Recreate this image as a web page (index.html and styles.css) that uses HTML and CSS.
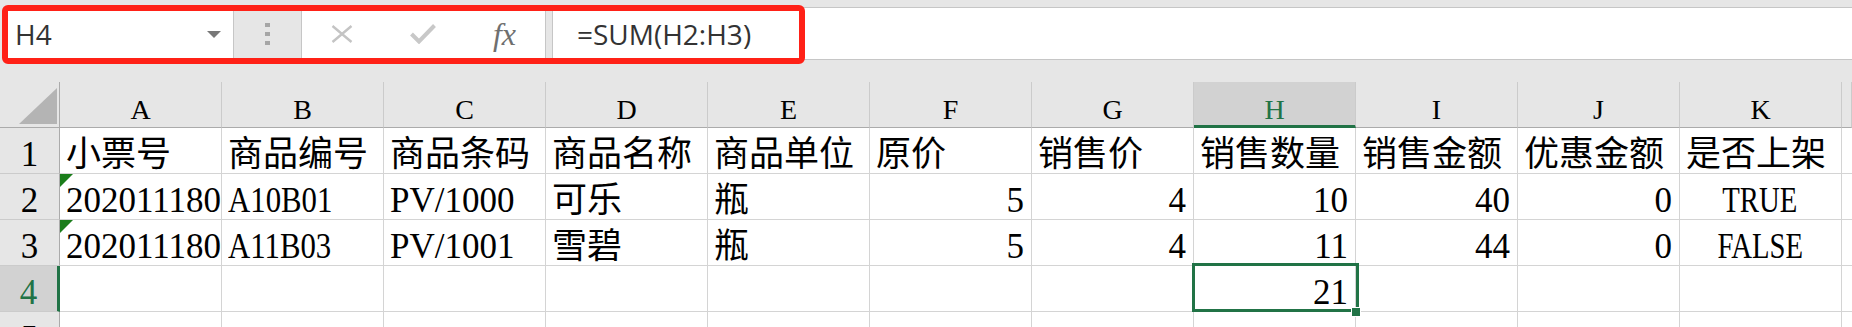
FILE: index.html
```html
<!DOCTYPE html>
<html lang="zh-CN">
<head>
<meta charset="utf-8">
<title>Sheet</title>
<link rel="stylesheet" href="styles.css">
</head>
<body>
<div class="app">
  <div class="fbar">
    <div class="namebox"><span class="ref">H4</span><span class="caret"></span></div>
    <div class="grip"><i></i><i></i><i></i></div>
    <div class="tools">
      <svg class="ic" width="22" height="18" viewBox="0 0 22 18"><path d="M1.5 1 L20.5 17 M20.5 1 L1.5 17" stroke="#c4c4c4" stroke-width="2.4" fill="none"/></svg>
      <svg class="ic" width="26" height="20" viewBox="0 0 26 20"><path d="M1.5 10 L9 17.5 L24.5 1.5" stroke="#c8c8c8" stroke-width="4" fill="none"/></svg>
      <span class="fx">fx</span>
    </div>
    <div class="sep"></div>
    <div class="formula">=SUM(H2:H3)</div>
  </div>
  <div class="annot"></div>
  <div class="sheet">
    <div class="corner"></div>
    <div class="ch">A</div><div class="ch">B</div><div class="ch">C</div><div class="ch">D</div><div class="ch">E</div><div class="ch">F</div><div class="ch">G</div><div class="ch sel">H</div><div class="ch">I</div><div class="ch">J</div><div class="ch">K</div><div class="ch"></div>

    <div class="rh">1</div>
    <div class="c">小票号</div><div class="c">商品编号</div><div class="c">商品条码</div><div class="c">商品名称</div><div class="c">商品单位</div><div class="c">原价</div><div class="c">销售价</div><div class="c">销售数量</div><div class="c">销售金额</div><div class="c">优惠金额</div><div class="c">是否上架</div><div class="c"></div>

    <div class="rh">2</div>
    <div class="c flag">20201118001</div><div class="c"><span class="nl">A10B01</span></div><div class="c">PV/1000</div><div class="c">可乐</div><div class="c">瓶</div><div class="c r">5</div><div class="c r">4</div><div class="c r">10</div><div class="c r">40</div><div class="c r">0</div><div class="c m"><span class="nc">TRUE</span></div><div class="c"></div>

    <div class="rh">3</div>
    <div class="c flag">20201118002</div><div class="c"><span class="nl">A11B03</span></div><div class="c">PV/1001</div><div class="c">雪碧</div><div class="c">瓶</div><div class="c r">5</div><div class="c r">4</div><div class="c r">11</div><div class="c r">44</div><div class="c r">0</div><div class="c m"><span class="nc">FALSE</span></div><div class="c"></div>

    <div class="rh sel">4</div>
    <div class="c"></div><div class="c"></div><div class="c"></div><div class="c"></div><div class="c"></div><div class="c"></div><div class="c"></div><div class="c r active">21<span class="frame"></span><span class="handle"></span></div><div class="c"></div><div class="c"></div><div class="c"></div><div class="c"></div>

    <div class="rh">5</div>
    <div class="c"></div><div class="c"></div><div class="c"></div><div class="c"></div><div class="c"></div><div class="c"></div><div class="c"></div><div class="c"></div><div class="c"></div><div class="c"></div><div class="c"></div><div class="c"></div>
  </div>
</div>
</body>
</html>
```

FILE: styles.css
```css
* { box-sizing: border-box; margin: 0; padding: 0; }
html, body { width: 1852px; height: 327px; overflow: hidden; background: #e6e6e6; }

.app { position: relative; padding-top: 7px; height: 327px; }

/* formula bar */
.fbar {
  display: flex;
  height: 53px;
  margin-left: 5px;
  border-top: 1px solid #c6c6c6;
  border-bottom: 1px solid #c6c6c6;
  background: #fff;
  font-family: "Open Sans", "Noto Sans", sans-serif;
  color: #333;
}
.namebox {
  width: 229px;
  display: flex;
  align-items: center;
  justify-content: space-between;
  padding: 0 12px 0 10px;
  border-right: 1px solid #c6c6c6;
  font-size: 28px;
}
.caret {
  width: 0; height: 0;
  border-left: 7px solid transparent;
  border-right: 7px solid transparent;
  border-top: 7px solid #787878;
  margin-top: 1px;
}
.grip {
  width: 68px;
  background: #e6e6e6;
  border-right: 1px solid #c6c6c6;
  display: flex;
  flex-direction: column;
  align-items: center;
  justify-content: center;
  gap: 5px;
}
.grip i { display: block; width: 5px; height: 4px; background: #a6a6a6; }
.tools {
  width: 243px;
  display: flex;
  align-items: center;
  justify-content: space-between;
  padding: 0 29px;
}
.ic { display: block; }
.fx {
  font-family: "Liberation Serif", serif;
  font-style: italic;
  font-size: 32px;
  line-height: 1;
  color: #6f6f6f;
}
.sep {
  width: 8px;
  background: #e6e6e6;
  border-left: 1px solid #c6c6c6;
  border-right: 1px solid #c6c6c6;
}
.formula {
  flex: 1;
  display: flex;
  align-items: center;
  padding-left: 24px;
  font-size: 28px;
}

/* red annotation frame */
.annot {
  position: absolute;
  left: 2px; top: 5px;
  width: 803px; height: 59px;
  border: 6px solid #ff2117;
  border-radius: 6px;
}

/* sheet grid */
.sheet {
  margin-top: 22px;
  display: grid;
  grid-template-columns: 60px repeat(11, 162px) 10px;
  grid-auto-rows: 46px;
  background: #fff;
  font-family: "Liberation Serif", "Noto Sans CJK SC", serif;
  color: #000;
}
.corner {
  position: relative;
  background: #e6e6e6;
  border-right: 1px solid #ababab;
  border-bottom: 1px solid #ababab;
}
.corner::after {
  content: "";
  position: absolute;
  right: 2px; bottom: 3px;
  width: 38px; height: 36px;
  background: #b4b4b4;
  clip-path: polygon(100% 0, 100% 100%, 0 100%);
}
.ch {
  background: #e6e6e6;
  border-right: 1px solid #cbcbcb;
  border-bottom: 1px solid #ababab;
  font-size: 28px;
  line-height: 30px;
  display: flex;
  align-items: flex-end;
  justify-content: center;
  padding-bottom: 2px;
}
.ch.sel {
  background: #d2d2d2;
  color: #217346;
  border-bottom: 3px solid #217346;
  padding-bottom: 0;
}
.rh {
  background: #e6e6e6;
  border-right: 1px solid #ababab;
  border-bottom: 1px solid #cbcbcb;
  font-size: 35px;
  line-height: 36px;
  display: flex;
  align-items: flex-end;
  justify-content: center;
}
.rh.sel {
  background: #d2d2d2;
  color: #217346;
  border-right: 3px solid #217346;
}
.c {
  position: relative;
  border-right: 1px solid #d4d4d4;
  border-bottom: 1px solid #d4d4d4;
  font-size: 35px;
  line-height: 36px;
  display: flex;
  align-items: flex-end;
  padding: 0 7px 0 6px;
  white-space: nowrap;
  overflow: hidden;
}
.r { justify-content: flex-end; }
.m { justify-content: center; }
.nl { display: inline-block; transform: scaleX(0.88); transform-origin: left bottom; }
.nc { display: inline-block; transform: scaleX(0.82); transform-origin: center bottom; }
.flag::before {
  content: "";
  position: absolute;
  left: 0; top: 0;
  width: 13px; height: 13px;
  background: #1b7d1b;
  clip-path: polygon(0 0, 100% 0, 0 100%);
}
.active { overflow: visible; }
.frame {
  position: absolute;
  left: -2px; top: -3px;
  width: 167px; height: 49px;
  border: 3px solid #217346;
  z-index: 2;
}
.handle {
  position: absolute;
  left: 157px; top: 41px;
  width: 10px; height: 10px;
  background: #217346;
  border: 1px solid #fff;
  z-index: 3;
}
```
